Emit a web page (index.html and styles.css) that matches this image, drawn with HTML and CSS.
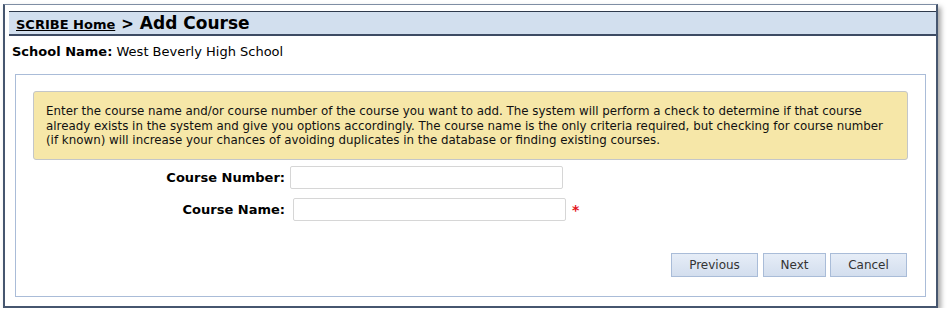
FILE: index.html
```html
<!DOCTYPE html>
<html lang="en">
<head>
<meta charset="UTF-8" />
<meta name="viewport" content="width=device-width, initial-scale=1" />
<title>Add Course</title>
<link rel="stylesheet" href="styles.css">
</head>
<body>

<div class="frame">
  <div class="titlebar">
    <a href="#" class="home-link">SCRIBE Home</a>
    <span class="sep">&gt;</span>
    <h1>Add Course</h1>
  </div>

  <div class="school">
    <b>School Name:</b> West Beverly High School
  </div>

  <div class="panel">
    <div class="notice">
      Enter the course name and/or course number of the course you want to add. The system will perform a check to determine if that course
      already exists in the system and give you options accordingly. The course name is the only criteria required, but checking for course number
      (if known) will increase your chances of avoiding duplicates in the database or finding existing courses.
    </div>

    <form class="course-form">
      <div class="row">
        <label for="course-number">Course Number:</label>
        <input type="text" id="course-number">
      </div>
      <div class="row">
        <label for="course-name">Course Name:</label>
        <input type="text" id="course-name" class="shift">
        <span class="required">*</span>
      </div>

      <div class="actions">
        <button type="button" class="btn btn-prev">Previous</button>
        <button type="button" class="btn btn-next">Next</button>
        <button type="button" class="btn btn-cancel">Cancel</button>
      </div>
    </form>
  </div>
</div>

</body>
</html>
```

FILE: styles.css
```css
* { box-sizing: border-box; }
body { margin: 0; background: #fff; font-family: "DejaVu Sans", Verdana, sans-serif; color: #000; }

.frame {
  width: 935px; height: 304px; margin: 4px 0 0 3px;
  border: 2px solid #46566f; border-top: 1px solid #7f8ea4;
  box-shadow: 3px 3px 5px rgba(0,0,0,0.35);
  padding-top: 6px;
}

.titlebar {
  margin-left: 4px; height: 25px; padding: 0 0 0 7px;
  background: #d2dfee; border-top: 1px solid #2f3a4c; border-bottom: 2px solid #3d4b63;
  display: flex; align-items: baseline; line-height: 22px;
}
.home-link { color: #000; font-weight: bold; font-size: 13px; text-decoration: underline; }
.sep { font-weight: bold; font-size: 15px; margin: 0 6px; }
.titlebar h1 { margin: 0; font-size: 17px; font-weight: bold; }

.school { font-size: 13px; line-height: 16px; margin: 8px 0 0 7px; }

.panel {
  margin: 14px 10px 0 10px; height: 223px;
  border: 1px solid #aabcd8; padding: 16px 17px 0 17px;
}

.notice {
  height: 69px; padding: 12px 12px 0 12px;
  background: #f6e7a8; border: 1px solid #c3c6c9; border-radius: 3px;
  font-size: 11.85px; line-height: 14.5px; color: #111;
}

.course-form { margin-top: 6px; }
.row { display: flex; align-items: center; height: 23px; margin-bottom: 9px; }
.row:last-of-type { height: 24px; }
.row label {
  width: 252px; text-align: right; font-weight: bold; font-size: 13px;
}
.row input {
  width: 273px; height: 100%; margin-left: 5px;
  border: 1px solid #d6d6d6; border-radius: 2px; background: #fff;
}
.row input.shift { margin-left: 8px; }
.required { color: #e3131b; font-weight: bold; font-size: 14px; margin-left: 6px; }

.actions { display: flex; justify-content: flex-end; gap: 5px; margin-top: 32px; padding-right: 1px; }
.btn {
  height: 24px; font-family: "DejaVu Sans", Verdana, sans-serif; font-size: 12px; color: #333;
  background: linear-gradient(#e6edf7, #d3deee); border: 1px solid #a9bcd8; cursor: pointer;
}
.btn-prev { width: 87px; }
.btn-next { width: 63px; margin-right: -1px; }
.btn-cancel { width: 77px; }
```
